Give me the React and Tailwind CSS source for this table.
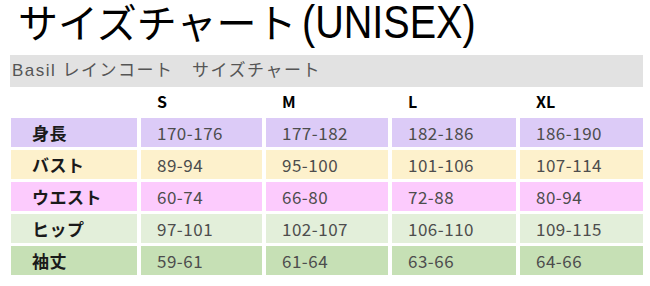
import React from "react";

const rows = [
  { label: "身長", bg: "bg-[#dccbf7]", vals: ["170-176", "177-182", "182-186", "186-190"] },
  { label: "バスト", bg: "bg-[#fdf1cc]", vals: ["89-94", "95-100", "101-106", "107-114"] },
  { label: "ウエスト", bg: "bg-[#fccbfd]", vals: ["60-74", "66-80", "72-88", "80-94"] },
  { label: "ヒップ", bg: "bg-[#e3efda]", vals: ["97-101", "102-107", "106-110", "109-115"] },
  { label: "袖丈", bg: "bg-[#c6e0b5]", vals: ["59-61", "61-64", "63-66", "64-66"] },
];

const font = { fontFamily: '"Liberation Sans", "Noto Sans CJK JP", sans-serif' };
const cjk = { fontFamily: '"Noto Sans CJK JP", "Noto Sans", sans-serif' };

export default function App() {
  return (
    <div className="w-[650px] h-[286px] bg-white overflow-hidden" style={font}>
      <div className="h-[55px] pl-[18px] text-[40px] leading-[44px] text-black font-normal whitespace-nowrap">
        サイズチャート
        <span className="ml-[6px] inline-block origin-left scale-x-[0.86] text-[46px]">(UNISEX)</span>
      </div>
      <div className="ml-[10px] w-[633px] h-[32px] bg-[#e2e2e2] pl-[2px] text-[17px] tracking-[1.5px] leading-[32px] text-[#555]">
        Basil レインコート　サイズチャート
      </div>
      <div className="ml-[11px] grid grid-cols-[126px_121px_122px_124px_123px] gap-x-[4px] gap-y-[3px]" style={cjk}>
        <div className="h-[28px]" />
        {["S", "M", "L", "XL"].map((s) => (
          <div key={s} className="h-[28px] pl-[16px] font-bold text-[16px] leading-[28px] text-black">
            {s}
          </div>
        ))}
        {rows.map((r) => (
          <React.Fragment key={r.label}>
            <div className={`h-[29px] ${r.bg} pl-[21px] font-bold text-[17px] tracking-[0.5px] leading-[29px] text-[#1a1a1a]`}>
              {r.label}
            </div>
            {r.vals.map((v, i) => (
              <div key={i} className={`h-[29px] ${r.bg} pl-[16px] text-[17px] tracking-[0.5px] leading-[29px] text-[#4d4d4d]`}>
                {v}
              </div>
            ))}
          </React.Fragment>
        ))}
      </div>
    </div>
  );
}
